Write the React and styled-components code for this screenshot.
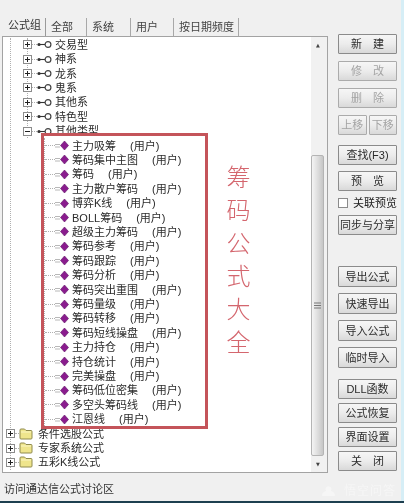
import React from 'react';
import styled, { createGlobalStyle } from 'styled-components';

const GlobalStyle = createGlobalStyle`
  html, body {
    margin: 0;
    padding: 0;
    background: #f0f0f0;
  }
`;

const groupRows = ['交易型', '神系', '龙系', '鬼系', '其他系', '特色型'];

const formulaRows = [
  '主力吸筹', '筹码集中主图', '筹码', '主力散户筹码', '博弈K线', 'BOLL筹码', '超级主力筹码',
  '筹码参考', '筹码跟踪', '筹码分析', '筹码突出重围', '筹码量级', '筹码转移', '筹码短线操盘',
  '主力持仓', '持仓统计', '完美操盘', '筹码低位密集', '多空头筹码线', '江恩线',
];

const rootRows = ['条件选股公式', '专家系统公式', '五彩K线公式'];

const tabs = [
  { label: '全部', w: 41 },
  { label: '系统', w: 44 },
  { label: '用户', w: 43 },
  { label: '按日期频度', w: 65 },
];

// tree icons
const Expander = ({ open }) => (
  <svg width="9" height="9" viewBox="0 0 9 9" style={{ flexShrink: 0 }}>
    <rect x="0.5" y="0.5" width="8" height="8" fill="#fff" stroke="#8c8c8c" />
    <path d={open ? 'M2 4.5h5' : 'M2 4.5h5M4.5 2v5'} stroke="#222" />
  </svg>
);

const NodeIcon = () => (
  <svg width="15" height="9" viewBox="0 0 15 9" style={{ flexShrink: 0 }}>
    <circle cx="2" cy="4.5" r="1.6" fill="#333" />
    <path d="M2 4.5h6.5" stroke="#333" strokeWidth="1.1" />
    <circle cx="11" cy="4.5" r="2.9" fill="#fff" stroke="#444" strokeWidth="1.2" />
  </svg>
);

const FormulaIcon = () => (
  <svg width="14" height="11" viewBox="0 0 14 11" style={{ flexShrink: 0 }}>
    <path d="M0 4.5h5M0 7h5" stroke="#b8b8b8" />
    <path d="M9.5 1l4 4.5-4 4.5-4-4.5z" fill="#8a1c8e" stroke="#5e1064" strokeWidth="0.6" />
  </svg>
);

const FolderIcon = () => (
  <svg width="14" height="12" viewBox="0 0 14 12" style={{ flexShrink: 0 }}>
    <path
      d="M1 3V2q0-1 1-1h3.5l1.5 1.5h5q1 0 1 1V10q0 1-1 1H2q-1 0-1-1z"
      fill="#efe58c"
      stroke="#8f8a4e"
    />
    <path d="M2 4h10" stroke="#fbf6c4" />
  </svg>
);

const Grip = () => (
  <svg width="7" height="7" viewBox="0 0 7 7">
    <path d="M0 1h7M0 3.5h7M0 6h7" stroke="#777" />
  </svg>
);

const WatermarkIcon = () => (
  <svg width="15" height="12" viewBox="0 0 15 12">
    <path d="M1 11q0-4 4-5a3 3 0 1 1 5 0q4 1 4 5z" fill="#fff" />
  </svg>
);

const App = () => {
  return (
    <Screen>
      <GlobalStyle />
      <Window>
        <Main>
          <LeftColumn>
            <TabBar>
              <ActiveTab>公式组</ActiveTab>
              {tabs.map((t) => (
                <Tab key={t.label} $w={t.w}>{t.label}</Tab>
              ))}
            </TabBar>

            <Panel>
              <Tree>
                <RootGuide>
                  <GroupGuide>
                    {groupRows.map((label) => (
                      <GroupRow key={label}>
                        <Expander />
                        <Connector $w={5} />
                        <NodeIcon />
                        <Label $ml={3}>{label}</Label>
                      </GroupRow>
                    ))}
                    <GroupRow>
                      <Expander open />
                      <Connector $w={5} />
                      <NodeIcon />
                      <Label $ml={3}>其他类型</Label>
                    </GroupRow>
                  </GroupGuide>

                  <FormulaGuide>
                    {formulaRows.map((label) => (
                      <Row key={label}>
                        <Connector $w={10} />
                        <FormulaIcon />
                        <Label $ml={3}>{label}</Label>
                        <Owner>(用户)</Owner>
                      </Row>
                    ))}
                  </FormulaGuide>

                  {rootRows.map((label) => (
                    <GroupRow key={label}>
                      <Expander />
                      <Connector $w={4} />
                      <FolderIcon />
                      <Label $ml={5}>{label}</Label>
                    </GroupRow>
                  ))}
                </RootGuide>
              </Tree>

              <Scrollbar>
                <ScrollArrow>▲</ScrollArrow>
                <TrackGap />
                <Thumb><Grip /></Thumb>
                <ScrollArrow>▼</ScrollArrow>
              </Scrollbar>

              {/* annotation drawn over the screenshot */}
              <RedBox />
              <RedCaption>筹码公式大全</RedCaption>
            </Panel>
          </LeftColumn>

          <ButtonColumn>
            <ButtonGroup $gap={7}>
              <Button>新 建</Button>
              <Button disabled>修 改</Button>
              <Button disabled>删 除</Button>
              <HalfRow>
                <Button disabled>上移</Button>
                <Button disabled>下移</Button>
              </HalfRow>
            </ButtonGroup>

            <ButtonGroup $gap={6} $top={10}>
              <Button>查找(F3)</Button>
              <Button>预 览</Button>
              <CheckRow>
                <CheckBox />
                关联预览
              </CheckRow>
              <Button>同步与分享</Button>
            </ButtonGroup>

            <ButtonGroup $gap={6} $top={31} $h={21}>
              <Button>导出公式</Button>
              <Button>快速导出</Button>
              <Button>导入公式</Button>
              <Button>临时导入</Button>
            </ButtonGroup>

            <ButtonGroup $gap={4} $top={11}>
              <Button>DLL函数</Button>
              <Button>公式恢复</Button>
              <Button>界面设置</Button>
              <Button>关 闭</Button>
            </ButtonGroup>
          </ButtonColumn>
        </Main>

        <StatusBar>
          <StatusText>访问通达信公式讨论区</StatusText>
          <Watermark>
            <WatermarkIcon />
            悟空问答
          </Watermark>
        </StatusBar>
      </Window>
      <EdgeStrip />
      <BottomLine />
    </Screen>
  );
};

// -------------------------------------------------------------------------
// Styled Components:

const Screen = styled.div`
  position: relative;
  display: flex;
  width: 404px;
  height: 503px;
  overflow: hidden;
  background: #f0f0f0;
  color: #222;
  font-family: "Liberation Sans", "Noto Sans CJK SC", sans-serif;
  font-size: 11px;
  filter: blur(0.45px);
`;

const Window = styled.div`
  display: flex;
  flex-direction: column;
  width: 401px;
  height: 501px;
`;

const EdgeStrip = styled.div`
  width: 3px;
  height: 501px;
  background: #d6eef6;
`;

const BottomLine = styled.div`
  position: absolute;
  left: 0;
  right: 0;
  bottom: 0;
  height: 2px;
  background: #1d3f4f;
`;

const Main = styled.div`
  display: flex;
  gap: 10px;
  height: 473px;
  padding-left: 2px;
`;

const LeftColumn = styled.div`
  display: flex;
  flex-direction: column;
  width: 326px;
  padding-top: 18px;
`;

const TabBar = styled.div`
  display: flex;
  height: 18px;
  padding-left: 4px;
  line-height: 18px;
`;

const ActiveTab = styled.div`
  width: 40px;
  padding-left: 2px;
  line-height: 15px;
  box-sizing: border-box;
  border-right: 1px solid #9a9a9a;
  color: #333;
`;

const Tab = styled.div`
  width: ${(p) => p.$w}px;
  padding-left: 5px;
  box-sizing: border-box;
  white-space: nowrap;
  border-right: 1px solid #a8a8a8;
  color: #444;
`;

const Panel = styled.div`
  position: relative;
  display: flex;
  flex: 1;
  border: 1px solid #a3a3a3;
  background: #fff;
`;

const Tree = styled.div`
  flex: 1;
  padding-top: 0.5px;
  overflow: hidden;
`;

const RootGuide = styled.div`
  margin-left: 7px;
  border-left: 1px dotted #b0b0b0;
`;

const GroupGuide = styled.div`
  margin-left: 16px;
  border-left: 1px dotted #b0b0b0;
`;

const FormulaGuide = styled.div`
  margin-left: 33px;
  border-left: 1px dotted #b0b0b0;
`;

const Row = styled.div`
  display: flex;
  align-items: center;
  height: 14.42px;
  line-height: 14px;
  white-space: nowrap;
`;

const GroupRow = styled(Row)`
  margin-left: -5px;
`;

const Connector = styled.span`
  flex-shrink: 0;
  width: ${(p) => p.$w}px;
  border-top: 1px dotted #b0b0b0;
`;

const Label = styled.span`
  margin-left: ${(p) => p.$ml}px;
  color: #2b2b2b;
`;

const Owner = styled.span`
  margin-left: 14px;
  color: #2b2b2b;
`;

const Scrollbar = styled.div`
  display: flex;
  flex-direction: column;
  width: 16px;
  background: #f1f1f1;
`;

const ScrollArrow = styled.div`
  display: flex;
  align-items: center;
  justify-content: center;
  width: 14px;
  height: 16px;
  color: #444;
  font-family: "DejaVu Sans", sans-serif;
  font-size: 5px;
`;

const TrackGap = styled.div`
  height: 102px;
`;

const Thumb = styled.div`
  display: flex;
  flex: 1;
  align-items: center;
  justify-content: center;
  width: 13px;
  box-sizing: border-box;
  border: 1px solid #b4b4b4;
  border-radius: 2px;
  background: linear-gradient(90deg, #f4f4f4, #dcdcdc 55%, #c6c6c6);
`;

const RedBox = styled.div`
  position: absolute;
  left: 38px;
  top: 96px;
  width: 167px;
  height: 296px;
  box-sizing: border-box;
  border: 3px solid #c4545a;
  pointer-events: none;
`;

const RedCaption = styled.div`
  position: absolute;
  left: 223px;
  top: 128px;
  color: #d4666e;
  font-family: "Noto Sans CJK SC", sans-serif;
  font-size: 24px;
  font-weight: 300;
  line-height: 24px;
  letter-spacing: 9px;
  writing-mode: vertical-rl;
`;

const ButtonColumn = styled.div`
  display: flex;
  flex-direction: column;
  width: 59px;
  padding-top: 34px;
`;

const ButtonGroup = styled.div`
  display: flex;
  flex-direction: column;
  gap: ${(p) => p.$gap}px;
  margin-top: ${(p) => p.$top || 0}px;

  button {
    height: ${(p) => p.$h || 20}px;
  }
`;

const Button = styled.button`
  padding: 0;
  box-sizing: border-box;
  border: 1px solid #8b8b8b;
  border-radius: 1px;
  background: linear-gradient(180deg, #f6f6f6, #ececec 50%, #d9d9d9);
  color: #2b2b2b;
  font-family: inherit;
  font-size: 11px;
  line-height: 16px;
  white-space: pre;
  word-spacing: 8px;

  &:disabled {
    border-color: #ababab;
    color: #a3a3a3;
  }
`;

const HalfRow = styled.div`
  display: flex;
  gap: 2px;

  button {
    flex: 1;
    min-width: 0;
  }
`;

const CheckRow = styled.label`
  display: flex;
  align-items: center;
  gap: 5px;
  height: 12px;
  line-height: 12px;
  white-space: nowrap;
`;

const CheckBox = styled.span`
  flex-shrink: 0;
  width: 10px;
  height: 10px;
  box-sizing: border-box;
  border: 1px solid #8b8b8b;
  background: #fff;
`;

const StatusBar = styled.div`
  display: flex;
  flex: 1;
  align-items: center;
  justify-content: space-between;
  padding: 2px 5px 0 4px;
`;

const StatusText = styled.span`
  color: #333;
`;

const Watermark = styled.span`
  display: flex;
  align-items: center;
  gap: 8px;
  margin-top: 6px;
  color: #fff;
  font-size: 12px;
  line-height: 14px;
  letter-spacing: 1px;
  opacity: 0.4;
`;

export default App;
